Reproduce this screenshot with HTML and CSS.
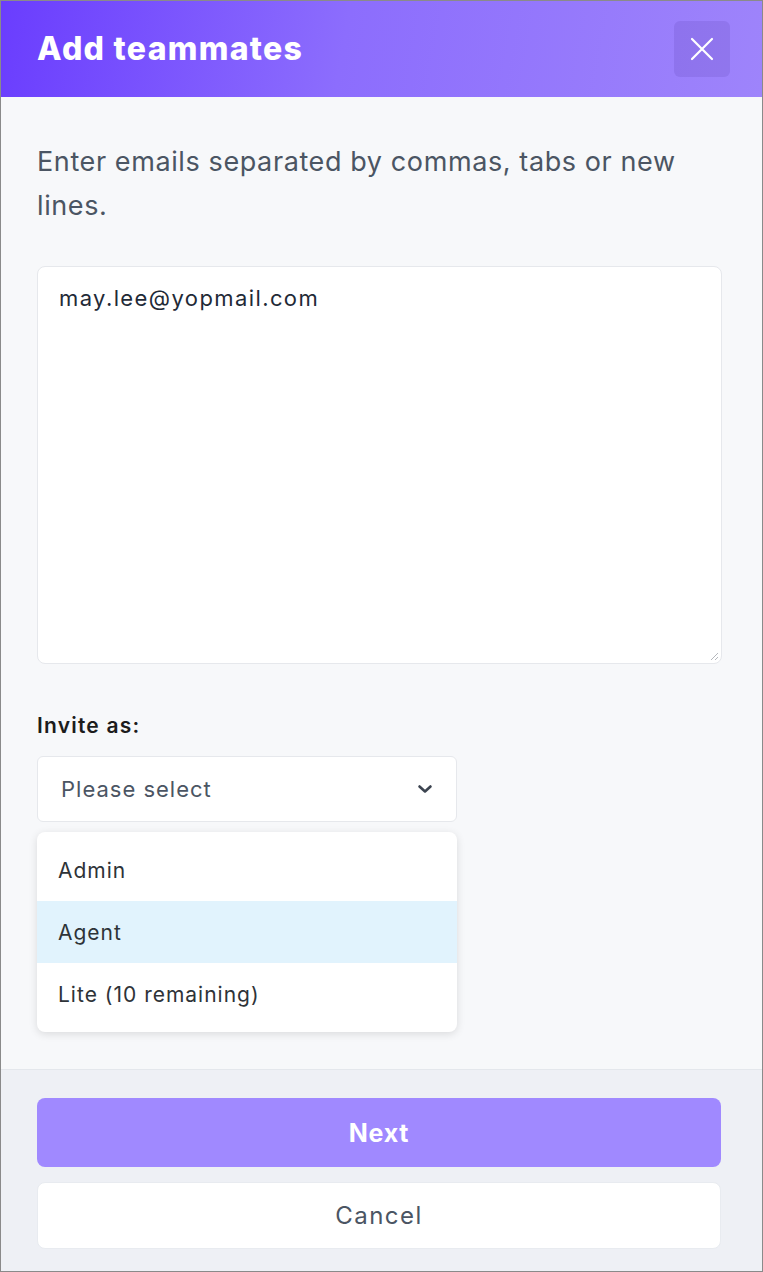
FILE: index.html
```html
<!DOCTYPE html>
<html lang="en">
<head>
<meta charset="utf-8">
<title>Add teammates</title>
<link rel="stylesheet" href="styles.css">
</head>
<body>
<div class="modal">
  <header class="modal-header">
    <h1 class="modal-title">Add teammates</h1>
    <button class="close-btn" aria-label="Close">
      <svg width="24" height="24" viewBox="0 0 24 24" fill="none" stroke="#fff" stroke-width="2.2" stroke-linecap="round"><path d="M2 2L22 22M22 2L2 22"/></svg>
    </button>
  </header>
  <main class="modal-body">
    <p class="hint">Enter emails separated by commas, tabs or new lines.</p>
    <div class="textarea">may.lee@yopmail.com
      <svg class="grip" width="10" height="10" viewBox="0 0 10 10" stroke="#b5b8bd" stroke-width="1"><path d="M9 2L2 9M9 6L6 9"/></svg>
    </div>
    <label class="field-label">Invite as:</label>
    <div class="select-wrap">
      <div class="select">
        <span>Please select</span>
        <svg width="16" height="10" viewBox="0 0 16 10" fill="none" stroke="#3c4450" stroke-width="2.6" stroke-linecap="round" stroke-linejoin="round"><path d="M2.5 2.5L8 7.5L13.5 2.5"/></svg>
      </div>
      <ul class="menu">
        <li class="item">Admin</li>
        <li class="item active">Agent</li>
        <li class="item">Lite (10 remaining)</li>
      </ul>
    </div>
  </main>
  <footer class="modal-footer">
    <button class="btn btn-primary">Next</button>
    <button class="btn btn-secondary">Cancel</button>
  </footer>
</div>
</body>
</html>
```

FILE: styles.css
```css
* { box-sizing: border-box; }
html, body { margin: 0; padding: 0; }
body {
  width: 763px;
  height: 1272px;
  font-family: Inter, "Noto Sans", sans-serif;
  background: #f7f8fa;
}
.modal {
  width: 763px;
  height: 1272px;
  border: 1px solid #8a8a8a;
  display: flex;
  flex-direction: column;
  background: #f7f8fa;
}
.modal-header {
  height: 96px;
  flex: none;
  display: flex;
  align-items: center;
  justify-content: space-between;
  padding: 0 32px 1px 36px;
  background: linear-gradient(100deg, #6a3dfe 0%, #8c6dfd 45%, #9e84fb 100%);
}
.modal-title {
  margin: 0;
  color: #fff;
  font-size: 32px;
  font-weight: 800;
  letter-spacing: 1.3px;
}
.close-btn {
  width: 56px;
  height: 56px;
  border: none;
  border-radius: 6px;
  background: rgba(60, 30, 140, 0.12);
  display: flex;
  align-items: center;
  justify-content: center;
  padding: 0;
}
.close-btn svg { width: 24px; height: 24px; }
.modal-body {
  flex: 1;
  padding: 43px 40px 0 36px;
  position: relative;
}
.hint {
  margin: 0;
  font-size: 27px;
  letter-spacing: 0.6px;
  line-height: 44px;
  color: #4b5563;
}
.textarea {
  margin-top: 38px;
  height: 398px;
  background: #fff;
  border: 1px solid #e6e8ec;
  border-radius: 8px;
  padding: 18px 21px;
  font-size: 22px;
  letter-spacing: 1.4px;
  color: #1f2a37;
  position: relative;
}
.grip { position: absolute; right: 2px; bottom: 2px; }
.field-label {
  display: block;
  margin-top: 49px;
  font-size: 21px;
  line-height: 25px;
  letter-spacing: 1.2px;
  font-weight: 600;
  color: #1c1c1c;
}
.select-wrap { position: relative; margin-top: 18px; width: 420px; }
.select {
  height: 66px;
  background: #fff;
  border: 1px solid #e6e8ec;
  border-radius: 6px;
  display: flex;
  align-items: center;
  justify-content: space-between;
  padding: 0 23px 0 23px;
  font-size: 22px;
  letter-spacing: 1px;
  color: #4b5563;
}
.menu {
  position: absolute;
  left: 0;
  top: 76px;
  width: 420px;
  margin: 0;
  padding: 7px 0 7px;
  list-style: none;
  background: #fff;
  border-radius: 8px;
  box-shadow: 0 2px 8px rgba(0, 0, 0, 0.12);
}
.item {
  height: 62px;
  display: flex;
  align-items: center;
  padding-left: 21px;
  font-size: 21px;
  letter-spacing: 1px;
  color: #2e3338;
}
.item.active { background: #e1f3fd; }
.modal-footer {
  flex: none;
  height: 202px;
  background: #eef0f5;
  border-top: 1px solid #e4e7ec;
  padding: 28px 40px 0 36px;
  display: flex;
  flex-direction: column;
  gap: 15px;
}
.btn {
  width: 684px;
  border: none;
  border-radius: 8px;
  font-family: inherit;
}
.btn-primary {
  height: 69px;
  background: #a089ff;
  color: #fff;
  font-size: 25px;
  letter-spacing: 0.7px;
  font-weight: 700;
}
.btn-secondary {
  height: 67px;
  background: #fff;
  color: #4b5563;
  font-size: 24px;
  letter-spacing: 1.5px;
  border: 1px solid #e8ebf0;
}
```
